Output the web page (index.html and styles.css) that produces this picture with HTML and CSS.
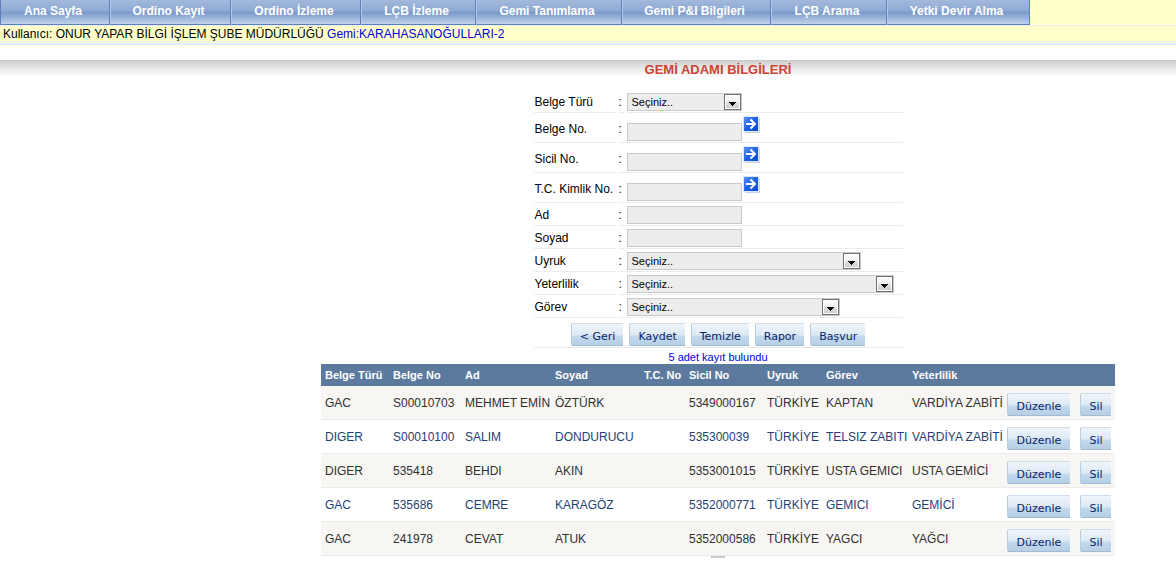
FILE: index.html
```
<!DOCTYPE html>
<html lang="tr">
<head>
<meta charset="utf-8">
<title>Gemi Adamı Bilgileri</title>
<link rel="stylesheet" href="styles.css">
</head>
<body>
<svg class="sprite" width="0" height="0" aria-hidden="true">
  <defs>
    <linearGradient id="dropFill" x1="0" y1="0" x2="0" y2="1">
      <stop offset="0" stop-color="#fafafa"/><stop offset="0.5" stop-color="#f0f0f0"/><stop offset="0.55" stop-color="#dedede"/><stop offset="1" stop-color="#d0d0d0"/>
    </linearGradient>
    <linearGradient id="goFill" x1="0" y1="0" x2="1" y2="1">
      <stop offset="0" stop-color="#5b93f2"/><stop offset="0.5" stop-color="#1f63e4"/><stop offset="1" stop-color="#0d48cc"/>
    </linearGradient>
    <symbol id="drop" viewBox="0 0 17 16">
      <rect x="0.5" y="0.5" width="16" height="15" fill="#fff" stroke="#707070"/>
      <rect x="2" y="2" width="13" height="12" fill="url(#dropFill)"/>
      <path d="M5 8h7v1h-1v1h-1v1H9v1H8v-1H7v-1H6V9H5z" fill="#000"/>
    </symbol>
    <symbol id="go" viewBox="0 0 17 17">
      <rect x="2" y="2" width="15" height="15" rx="1" fill="#a9bde0" opacity="0.7"/>
      <rect x="0" y="0" width="16" height="16" fill="#dde6f7"/>
      <rect x="1" y="1" width="14" height="14" fill="url(#goFill)"/>
      <path d="M3 8h9M7.500 3.500l4.500 4.500L7.500 12.500" fill="none" stroke="#fff" stroke-width="2"/>
    </symbol>
  </defs>
</svg>
<header class="top">
  <nav class="menu">
    <a class="tab tab-1" href="#">Ana Sayfa</a>
    <a class="tab tab-2" href="#">Ordino Kayıt</a>
    <a class="tab tab-3" href="#">Ordino İzleme</a>
    <a class="tab tab-4" href="#">LÇB İzleme</a>
    <a class="tab tab-5" href="#">Gemi Tanımlama</a>
    <a class="tab tab-6" href="#">Gemi P&amp;I Bilgileri</a>
    <a class="tab tab-7" href="#">LÇB Arama</a>
    <a class="tab tab-8" href="#">Yetki Devir Alma</a>
  </nav>
  <div class="user">Kullanıcı: ONUR YAPAR BİLGİ İŞLEM ŞUBE MÜDÜRLÜĞÜ <span class="ship">Gemi:KARAHASANOĞULLARI-2</span></div>
</header>
<main class="content">
  <h1 class="title">GEMİ ADAMI BİLGİLERİ</h1>
  <form class="form">
    <div class="row">
      <label class="cell" for="belgeTuru">Belge Türü</label><span class="cell">:</span>
      <div class="cell field"><span class="pick pick-s"><select id="belgeTuru"><option>Seçiniz..</option></select><svg class="drop"><use href="#drop"/></svg></span></div>
    </div>
    <div class="row tall">
      <label class="cell" for="belgeNo">Belge No.</label><span class="cell">:</span>
      <div class="cell field"><input id="belgeNo" type="text"><button class="go" type="button" aria-label="Belge No. ara"><svg><use href="#go"/></svg></button></div>
    </div>
    <div class="row tall">
      <label class="cell" for="sicilNo">Sicil No.</label><span class="cell">:</span>
      <div class="cell field"><input id="sicilNo" type="text"><button class="go" type="button" aria-label="Sicil No. ara"><svg><use href="#go"/></svg></button></div>
    </div>
    <div class="row tall">
      <label class="cell" for="kimlikNo">T.C. Kimlik No.</label><span class="cell">:</span>
      <div class="cell field"><input id="kimlikNo" type="text"><button class="go" type="button" aria-label="T.C. Kimlik No. ara"><svg><use href="#go"/></svg></button></div>
    </div>
    <div class="row">
      <label class="cell" for="ad">Ad</label><span class="cell">:</span>
      <div class="cell field"><input id="ad" type="text"></div>
    </div>
    <div class="row">
      <label class="cell" for="soyad">Soyad</label><span class="cell">:</span>
      <div class="cell field"><input id="soyad" type="text"></div>
    </div>
    <div class="row">
      <label class="cell" for="uyruk">Uyruk</label><span class="cell">:</span>
      <div class="cell field"><span class="pick pick-l"><select id="uyruk"><option>Seçiniz..</option></select><svg class="drop"><use href="#drop"/></svg></span></div>
    </div>
    <div class="row">
      <label class="cell" for="yeterlilik">Yeterlilik</label><span class="cell">:</span>
      <div class="cell field"><span class="pick pick-xl"><select id="yeterlilik"><option>Seçiniz..</option></select><svg class="drop"><use href="#drop"/></svg></span></div>
    </div>
    <div class="row">
      <label class="cell" for="gorev">Görev</label><span class="cell">:</span>
      <div class="cell field"><span class="pick pick-m"><select id="gorev"><option>Seçiniz..</option></select><svg class="drop"><use href="#drop"/></svg></span></div>
    </div>
    <div class="actions">
      <button class="btn" type="button">&lt; Geri</button>
      <button class="btn" type="button">Kaydet</button>
      <button class="btn" type="button">Temizle</button>
      <button class="btn" type="button">Rapor</button>
      <button class="btn" type="button">Başvur</button>
    </div>
  </form>
  <p class="count">5 adet kayıt bulundu</p>
  <table class="list">
    <colgroup><col class="c-type"><col class="c-doc"><col class="c-name"><col class="c-last"><col class="c-tc"><col class="c-reg"><col class="c-nat"><col class="c-duty"><col class="c-qual"><col class="c-edit"><col class="c-del"></colgroup>
    <thead><tr><th>Belge Türü</th><th>Belge No</th><th>Ad</th><th>Soyad</th><th>T.C. No</th><th>Sicil No</th><th>Uyruk</th><th>Görev</th><th>Yeterlilik</th><th></th><th></th></tr></thead>
    <tbody>
      <tr><td>GAC</td><td>S00010703</td><td>MEHMET EMİN</td><td>ÖZTÜRK</td><td></td><td>5349000167</td><td>TÜRKİYE</td><td>KAPTAN</td><td>VARDİYA ZABİTİ</td><td><button class="btn" type="button">Düzenle</button></td><td><button class="btn" type="button">Sil</button></td></tr>
      <tr><td>DIGER</td><td>S00010100</td><td>SALIM</td><td>DONDURUCU</td><td></td><td>535300039</td><td>TÜRKİYE</td><td>TELSIZ ZABITI</td><td>VARDİYA ZABİTİ</td><td><button class="btn" type="button">Düzenle</button></td><td><button class="btn" type="button">Sil</button></td></tr>
      <tr><td>DIGER</td><td>535418</td><td>BEHDI</td><td>AKIN</td><td></td><td>5353001015</td><td>TÜRKİYE</td><td>USTA GEMICI</td><td>USTA GEMİCİ</td><td><button class="btn" type="button">Düzenle</button></td><td><button class="btn" type="button">Sil</button></td></tr>
      <tr><td>GAC</td><td>535686</td><td>CEMRE</td><td>KARAGÖZ</td><td></td><td>5352000771</td><td>TÜRKİYE</td><td>GEMICI</td><td>GEMİCİ</td><td><button class="btn" type="button">Düzenle</button></td><td><button class="btn" type="button">Sil</button></td></tr>
      <tr><td>GAC</td><td>241978</td><td>CEVAT</td><td>ATUK</td><td></td><td>5352000586</td><td>TÜRKİYE</td><td>YAGCI</td><td>YAĞCI</td><td><button class="btn" type="button">Düzenle</button></td><td><button class="btn" type="button">Sil</button></td></tr>
    </tbody>
  </table>
  <div class="stub"></div>
</main>
</body>
</html>
```
FILE: styles.css
```
* { box-sizing: border-box; }
body {
  margin: 0;
  background: #fff;
  color: #000;
  font: 12px/16px "Liberation Sans", Arial, sans-serif;
}
.sprite { position: absolute; }

/* Header */
.top {
  background: #ffffcc;
  border-bottom: 2px solid #d9effc;
}
.menu {
  display: flex;
  border-bottom: 1px solid #ededed;
}
.tab {
  flex: none;
  height: 25px;
  padding-right: 4px;
  border-left: 1px solid #b5c9e6;
  border-right: 1px solid #5f7fb8;
  border-bottom: 1px solid #5f7fb8;
  background: linear-gradient(#a3b9dc 0, #8ea9d3 11px, #7897c9 12px, #c0d2ea 24px);
  color: #fff;
  font-weight: bold;
  line-height: 22px;
  text-align: center;
  text-decoration: none;
  white-space: nowrap;
}
.tab-1 { width: 110px; border-left-color: #5f7fb8; }
.tab-2 { width: 121px; }
.tab-3 { width: 130px; }
.tab-4 { width: 115px; }
.tab-5 { width: 146px; }
.tab-6 { width: 149px; }
.tab-7 { width: 116px; }
.tab-8 { width: 143px; }
.user {
  height: 16px;
  margin-bottom: 1px;
  padding-left: 3px;
  border-bottom: 1px solid #ededed;
}
.ship { color: #0000e0; }

/* Content */
.content {
  display: flex;
  flex-direction: column;
  align-items: center;
  margin-top: 15px;
  padding-left: 260px;
  background: linear-gradient(#cbcbcb, #e8e8e8 8px, #fff 17px) no-repeat;
}
.title {
  margin: 0;
  color: #cc4433;
  font-size: 13px;
  line-height: 20px;
}
.form {
  width: 369px;
  padding-top: 10px;
}
.row {
  display: grid;
  grid-template-columns: 82px 6px 1fr;
  gap: 2px;
  height: 23px;
}
.tall { height: 30px; }
.cell {
  display: flex;
  align-items: center;
  padding-left: 1px;
  padding-top: 2px;
  border-bottom: 1px solid #ebebee;
  white-space: nowrap;
}
.field {
  align-items: flex-end;
  padding-bottom: 1px;
}
.field input,
.field select {
  width: 115px;
  height: 18px;
  margin: 0;
  padding: 0 4px;
  border: 1px solid #cacaca;
  border-radius: 0;
  background: #ededed;
  color: #000;
  font: 11px "Liberation Sans", Arial, sans-serif;
  appearance: none;
}
.pick {
  position: relative;
  display: flex;
}
.field .pick select { width: 100%; }
.pick-s { width: 115px; }
.pick-m { width: 213px; }
.pick-l { width: 234px; }
.pick-xl { width: 267px; }
.drop {
  position: absolute;
  top: 1px;
  right: 1px;
  width: 17px;
  height: 16px;
  pointer-events: none;
}
.go {
  align-self: flex-start;
  padding: 1px 0 0;
  margin-left: 1px;
  border: 0;
  background: none;
}
.go svg {
  display: block;
  width: 17px;
  height: 17px;
}
.actions {
  display: flex;
  justify-content: center;
  gap: 6px;
  padding: 5px 0 1px;
  border-bottom: 1px solid #ebebee;
}
.btn {
  height: 23px;
  padding: 4px 8px 0;
  border: 0;
  border-left: 1px solid #b7cde0;
  border-top: 1px solid #ccdceb;
  border-bottom: 1px solid #a3bad0;
  border-radius: 2px 0 0 2px;
  background: linear-gradient(#f0f5fa 0, #dde9f4 11px, #c4d9eb 12px, #b3cee6 22px);
  color: #0a246a;
  font: 11px "DejaVu Sans", Verdana, sans-serif;
}
.count {
  margin: 0;
  padding-top: 2px;
  color: #0000e0;
  font-size: 11px;
  line-height: 14px;
}

/* Records */
.list {
  width: 794px;
  border-collapse: separate;
  border-spacing: 0;
  table-layout: fixed;
}
.list th,
.list td {
  padding: 0 4px;
  text-align: left;
  white-space: nowrap;
}
.list th {
  height: 22px;
  background: #5c7a9e;
  color: #fff;
  font-size: 11px;
}
.list td {
  height: 34px;
  border-bottom: 1px solid #ebebee;
  color: #1f3f75;
}
.list tr:nth-child(odd) td {
  background: #f7f6f2;
  color: #303030;
}
.list td:last-child { padding-left: 6px; }
.list .btn {
  display: block;
  width: 100%;
  margin-top: 3px;
  padding: 4px 0 0;
}
.c-type { width: 68px; }
.c-doc { width: 72px; }
.c-name { width: 90px; }
.c-last { width: 89px; }
.c-tc { width: 45px; }
.c-reg { width: 78px; }
.c-nat { width: 59px; }
.c-duty { width: 86px; }
.c-qual { width: 95px; }
.c-edit { width: 71px; }
.c-del { width: 41px; }
.stub {
  width: 14px;
  height: 2px;
  background: #cacaca;
}
```
